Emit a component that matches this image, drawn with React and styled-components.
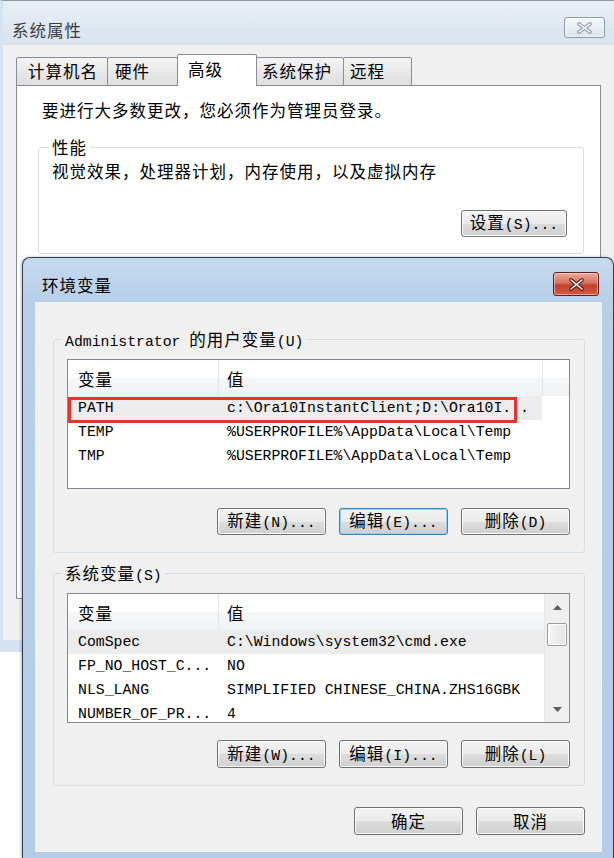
import React from 'react'
import styled, { createGlobalStyle } from 'styled-components'

const cjk = `"Noto Sans CJK SC", "Noto Sans", sans-serif`
const mono = `"Liberation Mono", "Noto Sans CJK SC", monospace`

const GlobalStyle = createGlobalStyle`
  html, body { margin: 0; padding: 0; background: #fff; }
  body { font-family: ${cjk}; font-size: 16.5px; letter-spacing: 1px; color: #000; }
  * { box-sizing: border-box; }
`

const Desktop = styled.div`
  position: relative;
  width: 614px;
  height: 858px;
  overflow: hidden;
  background: #fff;
`

// ---------- back window (系统属性) ----------
const BackWindow = styled.div`
  position: absolute;
  left: 0;
  top: 0;
  width: 614px;
  height: 652px;
  display: flex;
  flex-direction: column;
  background: #f0f0f0;
  border-top: 1px solid #8a96a3;
  border-left: 3px solid #d6e2ef;
  border-bottom: 12px solid #d6e2ef;
`

const BackTitleBar = styled.div`
  height: 44px;
  flex: none;
  display: flex;
  justify-content: space-between;
  align-items: flex-start;
  padding: 0 9px;
  background: linear-gradient(#e8eef6, #d9e3ee);
`

const TitleText = styled.div`
  margin-top: ${p => p.mt}px;
  line-height: 22px;
  color: ${p => p.color || '#000'};
`

const CloseBtn = styled.div`
  margin-top: ${p => p.mt}px;
  width: ${p => p.w}px;
  height: ${p => p.h}px;
  border-radius: 3px;
  display: flex;
  align-items: center;
  justify-content: center;
  border: 1px solid ${p => (p.active ? '#5e2119' : '#8e99a6')};
  background: ${p =>
    p.active
      ? 'linear-gradient(#eaa99c 0%, #d9735f 45%, #c4412c 55%, #d45a40 100%)'
      : 'linear-gradient(#f5f8fb, #dde4ec)'};
  box-shadow: inset 0 0 0 1px rgba(255, 255, 255, 0.45);
`

const BackBody = styled.div`
  flex: 1;
  padding: 9px 13px 0 13px;
`

const TabRow = styled.div`
  display: flex;
  align-items: flex-end;
  height: 32px;
  margin-bottom: -1px;
  position: relative;
  z-index: 1;
`

const Tab = styled.div`
  width: ${p => p.w}px;
  height: ${p => (p.sel ? 32 : 29)}px;
  margin-left: ${p => (p.first ? 0 : -1)}px;
  padding-left: ${p => p.pl}px;
  padding-bottom: ${p => (p.sel ? 4 : 0)}px;
  line-height: ${p => (p.sel ? 28 : 27)}px;
  border: 1px solid #898c95;
  border-bottom: ${p => (p.sel ? 'none' : '1px solid #898c95')};
  border-radius: 2px 2px 0 0;
  background: ${p => (p.sel ? '#fff' : 'linear-gradient(#f4f4f4, #dedede)')};
  position: relative;
  z-index: ${p => (p.sel ? 2 : 1)};
`

const TabPanel = styled.div`
  height: 514px;
  border: 1px solid #898c95;
  background: #fff;
  padding: 12px 16px 0 21px;
`

const Para = styled.div`
  margin-left: ${p => p.ml || 0}px;
  line-height: 24px;
`

// ---------- shared parts ----------
const Group = styled.fieldset`
  margin: ${p => p.mt || 0}px 0 0 0;
  padding: ${p => p.pt}px ${p => p.pr}px ${p => p.pb}px ${p => p.pl}px;
  border: 1px solid #d5dfe5;
  border-radius: 3px;
  min-width: 0;
`

const Legend = styled.legend`
  padding: 0 3px;
  margin-left: ${p => p.ml}px;
  height: 22px;
  line-height: 22px;
`

const Lat = styled.span`
  font-family: ${mono};
  font-size: 14.8px;
  letter-spacing: 0;
`

const Btn = styled.div`
  width: ${p => p.w}px;
  height: ${p => p.h || 27}px;
  margin-top: ${p => p.mt || 0}px;
  margin-left: ${p => (p.right ? 'auto' : '0')};
  display: flex;
  align-items: center;
  justify-content: center;
  border: 1px solid ${p => (p.focus ? '#3c7fb1' : '#707070')};
  border-radius: 3px;
  background: linear-gradient(#f2f2f2 0%, #ebebeb 50%, #dddddd 51%, #cfcfcf 100%);
  box-shadow: inset 0 0 0 1px ${p => (p.focus ? '#8fd3f5' : '#fcfcfc')};
  line-height: 1;
`

const ButtonRow = styled.div`
  display: flex;
  justify-content: flex-end;
  gap: 13px;
  margin-top: ${p => p.mt}px;
`

// ---------- front dialog (环境变量) ----------
const Dialog = styled.div`
  position: absolute;
  left: 22px;
  top: 257px;
  width: 592px;
  height: 601px;
  display: flex;
  flex-direction: column;
  border: 1px solid #2f3f52;
  border-bottom: none;
  border-radius: 8px 8px 0 0;
  background: linear-gradient(#c6daef 0px, #b7cfe9 44px, #b2cce9 100%);
  box-shadow: -1px 0 3px rgba(0, 0, 0, 0.25);
  z-index: 5;
`

const DialogTitleBar = styled.div`
  height: 44px;
  flex: none;
  display: flex;
  justify-content: space-between;
  align-items: flex-start;
  padding: 0 14px 0 19px;
`

const Client = styled.div`
  height: 550px;
  flex: none;
  margin: 0 11px 0 12px;
  background: #f0f0f0;
  padding: 26px 17px 0 18px;
`

const ListView = styled.div`
  position: relative;
  height: 130px;
  border: 1px solid #828790;
  background: #fff;
  display: flex;
  overflow: hidden;
`

const ListMain = styled.div`
  flex: 1;
  min-width: 0;
`

const Header = styled.div`
  height: 36px;
  display: flex;
  background: linear-gradient(#ffffff 0%, #ffffff 48%, #f5f6f7 52%, #f1f2f3 100%);
`

const HCell = styled.div`
  width: ${p => (p.w ? `${p.w}px` : 'auto')};
  flex: ${p => (p.w ? 'none' : '1')};
  padding: 3px 0 0 ${p => p.pl || 0}px;
  line-height: 33px;
  border-right: ${p => (p.last ? 'none' : '1px solid #e3e4e6')};
`

const Row = styled.div`
  width: ${p => (p.w ? `${p.w}px` : '100%')};
  height: 24px;
  display: flex;
  background: ${p => (p.sel ? '#ececec' : 'transparent')};
  font-family: ${mono};
  font-size: 14.8px;
  letter-spacing: 0;
  line-height: 25px;
  white-space: nowrap;
`

const Cell = styled.div`
  width: ${p => (p.w ? `${p.w}px` : 'auto')};
  flex: ${p => (p.w ? 'none' : '1')};
  padding-left: ${p => p.pl}px;
  overflow: hidden;
`

const Mark = styled.div`
  position: absolute;
  left: 0;
  top: 37px;
  width: 449px;
  height: 26px;
  border: 3px solid #e8322d;
`

const ScrollBar = styled.div`
  width: 25px;
  flex: none;
  display: flex;
  flex-direction: column;
  background: #efefef;
  border-left: 1px solid #e6e6e6;
`

const Arrow = styled.div`
  height: 26px;
  display: flex;
  align-items: center;
  justify-content: center;
`

const Thumb = styled.div`
  height: 23px;
  margin: 3px 2px 0 2px;
  border: 1px solid #9a9a9a;
  border-radius: 2px;
  background: linear-gradient(90deg, #f6f6f6, #e4e4e4);
  box-shadow: inset 0 0 0 1px #fdfdfd;
`

const Spacer = styled.div`
  flex: 1;
`

const CloseX = ({ outer, inner, w = 12, h = 10 }) => (
  <svg width={w + 4} height={h + 4} viewBox={`-2 -2 ${w + 4} ${h + 4}`}>
    <path d={`M0 0 L${w} ${h} M${w} 0 L0 ${h}`} stroke={outer} strokeWidth="3.6" strokeLinecap="round" />
    <path d={`M0 0 L${w} ${h} M${w} 0 L0 ${h}`} stroke={inner} strokeWidth="1.6" strokeLinecap="round" />
  </svg>
)

const Tri = ({ down }) => (
  <svg width="9" height="5" viewBox="0 0 9 5">
    <polygon points={down ? '0,0 9,0 4.5,5' : '0,5 9,5 4.5,0'} fill="#5c5c5c" />
  </svg>
)

const tabs = [
  { label: '计算机名', w: 92, pl: 11 },
  { label: '硬件', w: 71, pl: 7 },
  { label: '高级', w: 80, pl: 10, sel: true },
  { label: '系统保护', w: 88, pl: 5 },
  { label: '远程', w: 69, pl: 6 },
]

const userVars = [
  { name: 'PATH', value: 'c:\\Ora10InstantClient;D:\\Ora10I. .', sel: true },
  { name: 'TEMP', value: '%USERPROFILE%\\AppData\\Local\\Temp' },
  { name: 'TMP', value: '%USERPROFILE%\\AppData\\Local\\Temp' },
]

const sysVars = [
  { name: 'ComSpec', value: 'C:\\Windows\\system32\\cmd.exe', sel: true },
  { name: 'FP_NO_HOST_C...', value: 'NO' },
  { name: 'NLS_LANG', value: 'SIMPLIFIED CHINESE_CHINA.ZHS16GBK' },
  { name: 'NUMBER_OF_PR...', value: '4' },
]

const BtnLabel = ({ zh, key1, dots }) => (
  <span>
    {zh}
    <Lat>({key1}){dots ? '...' : ''}</Lat>
  </span>
)

export default function App() {
  return (
    <Desktop>
      <GlobalStyle />

      <BackWindow>
        <BackTitleBar>
          <TitleText mt={18} color="#3c3c3c">系统属性</TitleText>
          <CloseBtn mt={16} w={41} h={21}>
            <CloseX outer="#8a949f" inner="#eef2f6" w={11} h={8} />
          </CloseBtn>
        </BackTitleBar>
        <BackBody>
          <TabRow>
            {tabs.map((t, i) => (
              <Tab key={t.label} w={t.w} pl={t.pl} sel={t.sel} first={i === 0}>
                {t.label}
              </Tab>
            ))}
          </TabRow>
          <TabPanel>
            <Para ml={4}>要进行大多数更改，您必须作为管理员登录。</Para>
            <Group mt={14} pt={1} pr={16} pb={16} pl={13}>
              <Legend ml={-3}>性能</Legend>
              <Para>视觉效果，处理器计划，内存使用，以及虚拟内存</Para>
              <Btn w={106} mt={27} right>
                <BtnLabel zh="设置" key1="S" dots />
              </Btn>
            </Group>
          </TabPanel>
        </BackBody>
      </BackWindow>

      <Dialog>
        <DialogTitleBar>
          <TitleText mt={16}>环境变量</TitleText>
          <CloseBtn mt={14} w={46} h={24} active>
            <CloseX outer="#5a1a12" inner="#ffffff" w={11} h={9} />
          </CloseBtn>
        </DialogTitleBar>
        <Client>
          <Group pt={9} pr={14} pb={17} pl={13}>
            <Legend ml={-5}>
              <Lat>Administrator </Lat>的用户变量<Lat>(U)</Lat>
            </Legend>
            <ListView>
              <ListMain>
                <Header>
                  <HCell w={151} pl={10}>变量</HCell>
                  <HCell w={324} pl={8}>值</HCell>
                  <HCell last />
                </Header>
                {userVars.map(v => (
                  <Row key={v.name} sel={v.sel} w={474}>
                    <Cell w={151} pl={10}>{v.name}</Cell>
                    <Cell pl={8}>{v.value}</Cell>
                  </Row>
                ))}
              </ListMain>
              <Mark />
            </ListView>
            <ButtonRow mt={19}>
              <Btn w={109}><BtnLabel zh="新建" key1="N" dots /></Btn>
              <Btn w={109} focus><BtnLabel zh="编辑" key1="E" dots /></Btn>
              <Btn w={109}><BtnLabel zh="删除" key1="D" /></Btn>
            </ButtonRow>
          </Group>

          <Group mt={9} pt={9} pr={14} pb={17} pl={13}>
            <Legend ml={-5}>
              系统变量<Lat>(S)</Lat>
            </Legend>
            <ListView>
              <ListMain>
                <Header>
                  <HCell w={151} pl={10}>变量</HCell>
                  <HCell pl={8} last>值</HCell>
                </Header>
                {sysVars.map(v => (
                  <Row key={v.name} sel={v.sel}>
                    <Cell w={151} pl={10}>{v.name}</Cell>
                    <Cell pl={8}>{v.value}</Cell>
                  </Row>
                ))}
              </ListMain>
              <ScrollBar>
                <Arrow><Tri /></Arrow>
                <Thumb />
                <Spacer />
                <Arrow><Tri down /></Arrow>
              </ScrollBar>
            </ListView>
            <ButtonRow mt={17}>
              <Btn w={109} h={28}><BtnLabel zh="新建" key1="W" dots /></Btn>
              <Btn w={109} h={28}><BtnLabel zh="编辑" key1="I" dots /></Btn>
              <Btn w={109} h={28}><BtnLabel zh="删除" key1="L" /></Btn>
            </ButtonRow>
          </Group>

          <ButtonRow mt={21}>
            <Btn w={109} h={28}>确定</Btn>
            <Btn w={109} h={28}>取消</Btn>
          </ButtonRow>
        </Client>
      </Dialog>
    </Desktop>
  )
}
